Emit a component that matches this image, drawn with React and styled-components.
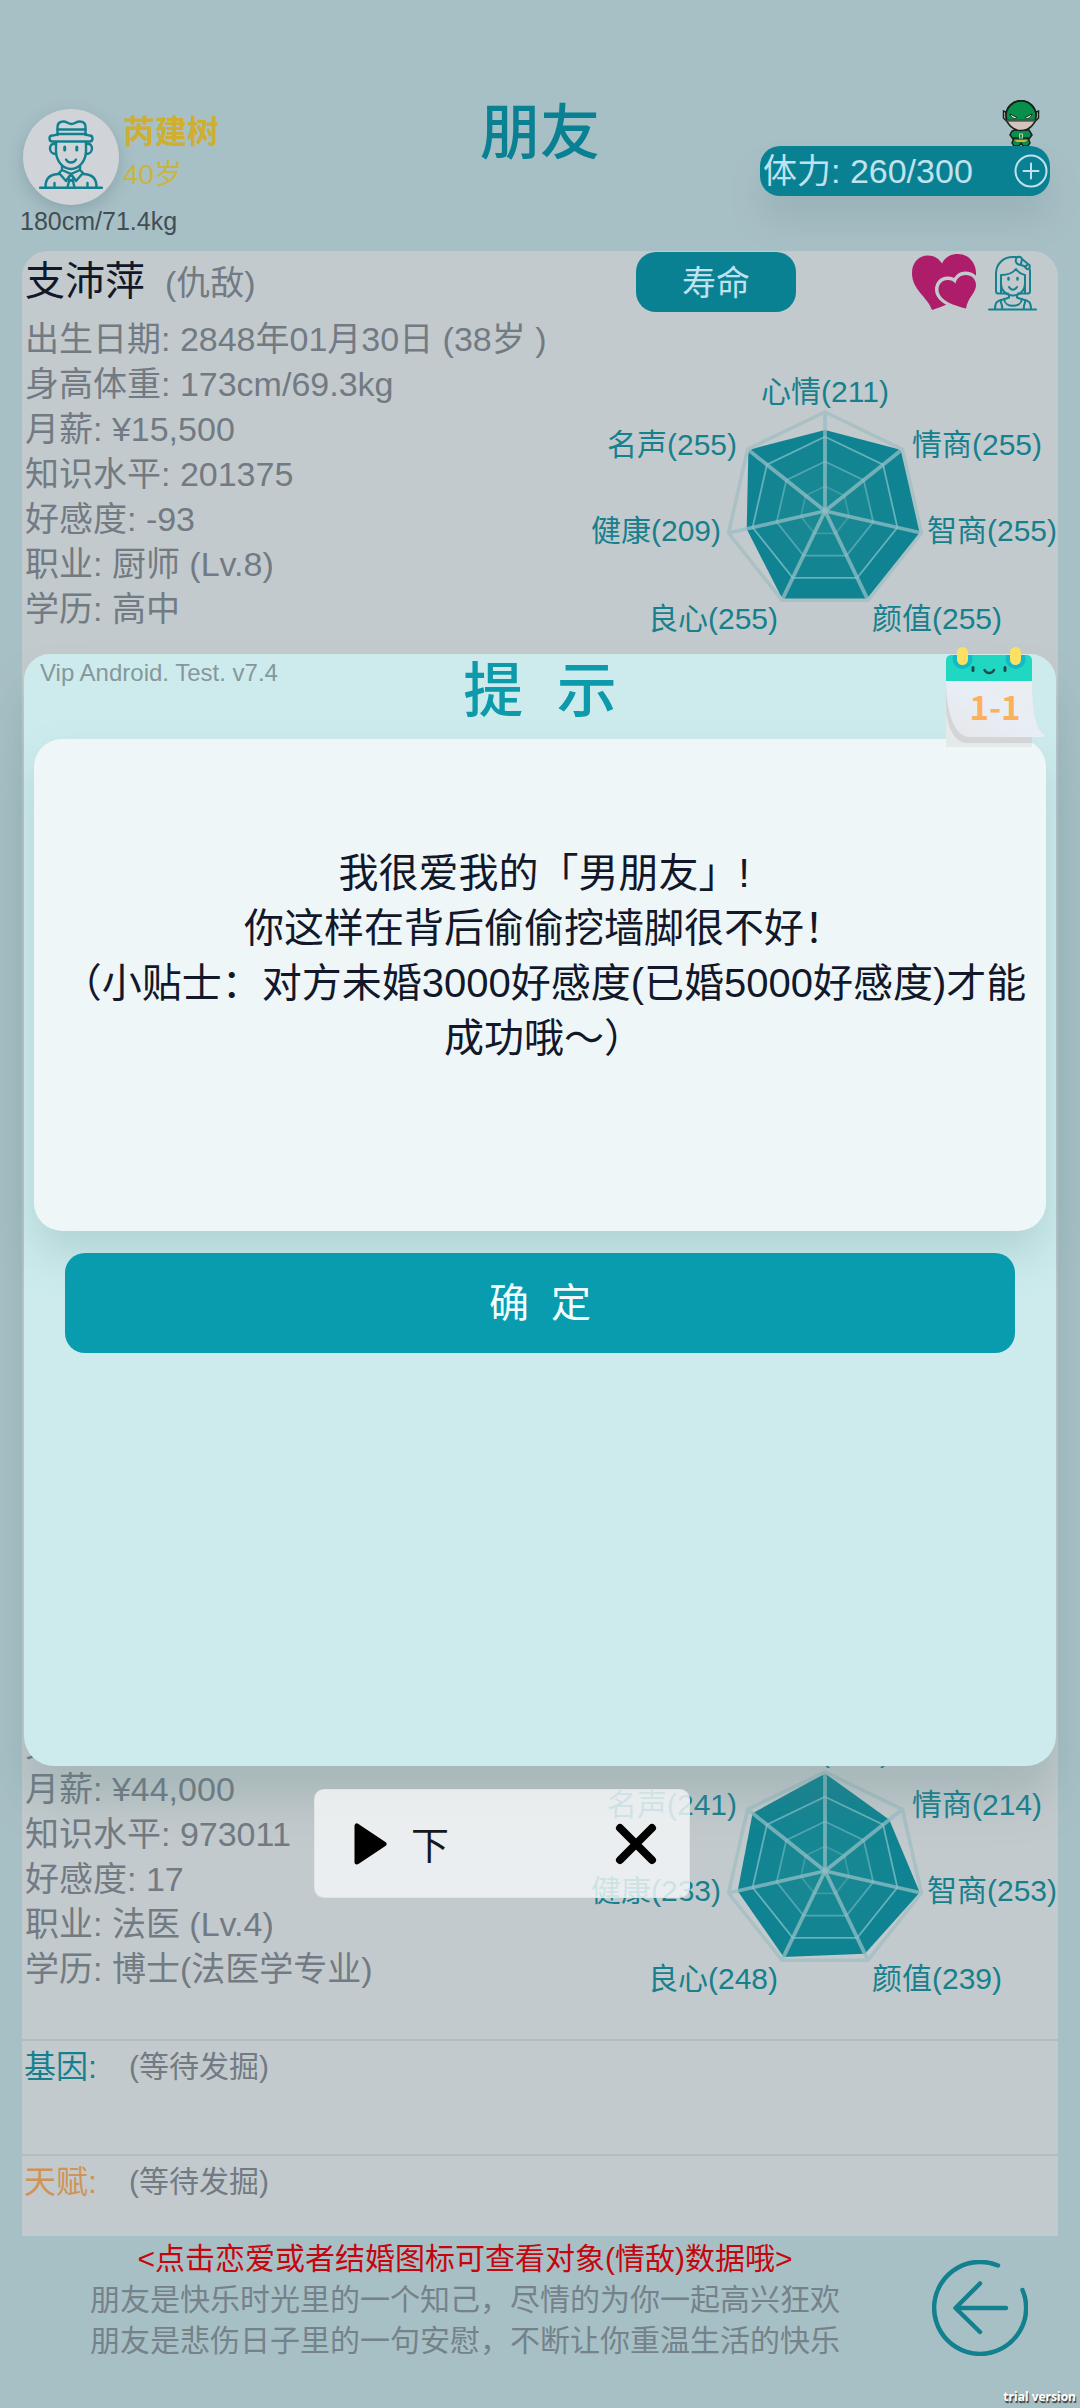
import React from "react";
import styled, { createGlobalStyle } from "styled-components";

const teal = "#0a8192";
const ink = "#727a83";

const GlobalStyle = createGlobalStyle`
  * { box-sizing: border-box; }
  body {
    margin: 0;
    background: #a7c0c6;
    font-family: "Liberation Sans", "Noto Sans CJK SC", sans-serif;
  }
  h1, h2, p, ul, dl, dd, dt { margin: 0; padding: 0; font-weight: 400; }
  button { border: 0; padding: 0; background: none; font-family: inherit; cursor: pointer; }
  svg { display: block; }
`;

const Screen = styled.div`
  position: relative;
  display: flex;
  flex-direction: column;
  height: 100vh;
  overflow: hidden;
`;

const Header = styled.header`
  display: grid;
  grid-template-columns: 1fr auto 1fr;
  align-items: start;
  flex: 0 0 251px;
  padding: 98px 20px 0;
`;

const Profile = styled.div`
  padding-top: 11px;
`;

const ProfileRow = styled.div`
  display: flex;
  gap: 4px;
  padding-left: 3px;
`;

const Avatar = styled.div`
  display: flex;
  justify-content: center;
  width: 96px;
  height: 96px;
  padding-top: 11px;
  border-radius: 50%;
  background: #d0d3d7;
  box-shadow: 0 6px 16px rgba(60, 90, 100, 0.25);
`;

const PlayerName = styled.p`
  color: #cfae30;
  font-size: 32px;
  font-weight: 700;
  line-height: 46px;
`;

const PlayerAge = styled.p`
  color: #c9b443;
  font-size: 28px;
  line-height: 40px;
`;

const PlayerBody = styled.p`
  color: #434d54;
  font-size: 25px;
  line-height: 32px;
`;

const PageTitle = styled.h1`
  color: ${teal};
  font-size: 60px;
  font-weight: 500;
  line-height: 72px;
`;

const EnergyArea = styled.div`
  display: flex;
  flex-direction: column;
  align-items: flex-end;
  padding: 2px 10px 0 0;
`;

const HeroSlot = styled.div`
  padding-right: 10px;
`;

const Energy = styled.div`
  display: flex;
  align-items: center;
  justify-content: space-between;
  width: 290px;
  height: 50px;
  padding: 0 2px 0 3px;
  border-radius: 20px;
  background: ${teal};
  color: #c0e2ee;
  font-size: 34px;
  line-height: 50px;
  box-shadow: 0 24px 34px rgba(90, 110, 110, 0.16);
`;

const FriendList = styled.main`
  flex: 1 1 0;
  min-height: 0;
  margin: 0 22px;
  overflow: hidden;
  border-radius: 26px 26px 0 0;
  background: #c3cacd;
`;

const Card = styled.article`
  display: flex;
  flex-direction: column;
  height: 680px;
`;

const CardHeader = styled.header`
  display: flex;
  align-items: center;
  flex: 0 0 62px;
  padding: 0 20px 0 3px;
`;

const FriendName = styled.h2`
  flex: 1;
  color: #12182a;
  font-size: 40px;
  line-height: 60px;
`;

const Relation = styled.span`
  margin-left: 20px;
  color: ${ink};
  font-size: 34px;
`;

const LifeButton = styled.button`
  width: 160px;
  height: 60px;
  margin-right: 116px;
  padding-bottom: 4px;
  border-radius: 20px;
  background: ${teal};
  color: #c0e2ee;
  font-size: 34px;
`;

const IconPair = styled.div`
  display: flex;
  align-items: flex-end;
  gap: 12px;
`;

const CardBody = styled.div`
  display: flex;
  justify-content: space-between;
  flex: 0 0 366px;
  padding: 4px 0 0 3px;
`;

const Facts = styled.ul`
  list-style: none;
  color: ${ink};
  font-size: 34px;
  line-height: 45px;
  white-space: nowrap;
`;

const ChartSlot = styled.div`
  flex: 0 0 468px;
  margin-left: -200px;
  padding-top: 53px;
`;

const TraitRow = styled.dl`
  display: flex;
  gap: 32px;
  height: 115px;
  padding: 6px 0 0 2px;
  border-top: 2px solid #b3bcbf;
  line-height: 40px;
`;

const TraitLabel = styled.dt`
  color: ${(p) => p.$color};
  font-size: 32px;
`;

const TraitValue = styled.dd`
  color: ${ink};
  font-size: 30px;
`;

const Footer = styled.footer`
  display: flex;
  align-items: flex-start;
  justify-content: space-between;
  flex: 0 0 172px;
  padding: 2px 52px 0 90px;
`;

const Notes = styled.div`
  text-align: center;
  font-size: 30px;
  line-height: 41px;
  color: #75828a;
`;

const Warning = styled.p`
  color: #c4070f;
`;

const BackButton = styled.button`
  margin-top: 22px;
`;

const Watermark = styled.span`
  position: absolute;
  right: 4px;
  bottom: 2px;
  color: #fff;
  font: 700 12px/18px "Open Sans", sans-serif;
  text-shadow: 1px 2px 1px #333;
`;

const Overlay = styled.div`
  position: absolute;
  inset: 0;
  display: flex;
  align-items: center;
  padding: 12px 24px 0;
`;

const Dialog = styled.section`
  flex: 1;
  height: 1112px;
  padding: 0 10px;
  border-radius: 26px 26px 30px 30px;
  background: #cdebed;
  box-shadow: 0 34px 44px rgba(90, 130, 130, 0.26);
`;

const DialogHeader = styled.header`
  display: grid;
  grid-template-columns: 1fr auto 1fr;
  height: 85px;
`;

const Version = styled.p`
  padding-left: 6px;
  color: #85979c;
  font-size: 24px;
  line-height: 38px;
`;

const DialogTitle = styled.h2`
  color: #0d9aaa;
  font-size: 60px;
  font-weight: 500;
  line-height: 76px;
  white-space: pre;
`;

const CalendarSlot = styled.div`
  position: relative;
  justify-self: end;
  top: -8px;
`;

const Message = styled.div`
  display: flex;
  align-items: center;
  justify-content: center;
  height: 492px;
  padding: 0 16px 58px 24px;
  border-radius: 28px;
  background: #eef6f8;
  color: #12182a;
  font-size: 40px;
  line-height: 55px;
  text-align: center;
  box-shadow: 0 24px 40px rgba(120, 160, 160, 0.3);
`;

const Confirm = styled.button`
  position: relative;
  display: block;
  width: calc(100% - 62px);
  height: 100px;
  margin: 22px auto 0;
  padding-bottom: 6px;
  border-radius: 20px;
  background: #089cae;
  color: #f2fdff;
  font-size: 40px;
  white-space: pre;
`;

const FloatingBar = styled.div`
  position: absolute;
  left: 314px;
  top: 1789px;
  display: flex;
  align-items: center;
  width: 376px;
  height: 109px;
  padding: 0 32px 0 39px;
  border: 1px solid rgba(220, 226, 228, 0.8);
  border-radius: 10px;
  background: rgba(243, 245, 247, 0.83);
`;

const BarLabel = styled.span`
  flex: 1;
  padding: 4px 0 0 24px;
  color: #17181c;
  font-size: 38px;
  line-height: 50px;
`;

function ManIcon() {
  return (
    <svg width="64" height="70" viewBox="-1 -1 64 70" fill="none" stroke="#12808f" strokeWidth="2.4" strokeLinecap="round" strokeLinejoin="round" aria-hidden="true">
      <path d="M17.5 14V6c0-4 3-5.500 6-5.500 3.500 0 4.500 2.500 8 2.500s4.500-2.500 8-2.500c3 0 6 1.500 6 5.500v8" />
      <path d="M17.500 8.500h28M17.500 13h28" />
      <path d="M12.500 14.500c-4 0-4 6 0 6h37c4 0 4-6 0-6-1.500 0-2.500-.500-4-1.500M12.500 14.500c2 0 3.500-.500 5-1.500" />
      <path d="M16 21v9c0 10 7 18 15 18s15-8 15-18v-9" />
      <path d="M16 23c-8-2-8 10 0 10M46 23c8-2 8 10 0 10" />
      <path d="M24.700 26v3M36.800 26v3" strokeWidth="3" />
      <path d="M26 38.500c2 4 8 4 10 0" />
      <path d="M22 45v4l-3 3 7 8 5-7 5 7 7-8-3-3v-4M22 49l9 4 9-4" />
      <path d="M28 57l3-3 3 3-3 3zM29 60l-1.500 6.500M33 60l1.500 6.500" />
      <path d="M0 66.700h62M5.500 66c0-9 5-13 13.500-13M56.500 66c0-9-5-13-13.500-13M14.500 62v4M47.500 62v4" />
    </svg>
  );
}

function HeroIcon() {
  return (
    <svg width="38" height="46" viewBox="-1 0 38 46" aria-hidden="true">
      <g stroke="#17221a" strokeWidth="1.500">
        <path d="M3 12L.5 11v7l4 4zM33 12l2.500-1v7l-4 4z" fill="#d8c3b4" />
        <path d="M9 31L7 35l3 4h16l3-4-3-5H12z" fill="#0b8d51" />
        <path d="M11 38h14l2 5-2 3h-5l-2-3-2 3h-5l-2-3z" fill="#0b8d51" />
        <path d="M11 40h14l-3 2h-8z" fill="#c6b93e" stroke="none" />
        <circle cx="18" cy="15.500" r="15" fill="#d3c4bd" />
        <path d="M3 16a15 15 0 0 1 30 0l-1 4.500H4z" fill="#07904c" />
      </g>
      <path d="M3.500 20.500h29" stroke="#3f5c4a" strokeWidth="2" />
      <path d="M7 14l7 3.500c-1 2-6 1-7-3.500zM29 14l-7 3.500c1 2 6 1 7-3.500z" fill="#e8efe6" stroke="#17221a" strokeWidth="1" />
      <rect x="16.500" y="34" width="3" height="4" fill="none" stroke="#a9d9a0" />
    </svg>
  );
}

function PlusIcon() {
  return (
    <svg width="34" height="34" viewBox="0 0 34 34" fill="none" stroke="#c0e2ee" strokeWidth="2" strokeLinecap="round" aria-hidden="true">
      <circle cx="17" cy="17" r="15.500" />
      <path d="M17 9.500v15M9.500 17h15" />
    </svg>
  );
}

const smallHeart = "M54 54.500C44 52 26.500 47 26.500 35.500c0-5.500 4-9.500 9-9.500 3.500 0 6 1 8 3.500 1-5 5-8.500 10-8.500 6 0 10.500 4 10.500 10 0 8-8 12-10 23.500z";

function HeartsIcon() {
  return (
    <svg width="64" height="57" viewBox="0 0 64 57" aria-hidden="true">
      <path d="M20 56C15 42 0 36 0 19 0 8 7 1.500 16 1.500c6 0 11 3 14 8C33 3 39 0 46 0c10 0 18 8 18 19 0 16-20 30-44 37z" fill="#ad1d6a" />
      <path d={smallHeart} fill="#c3cacd" stroke="#c3cacd" strokeWidth="7" strokeLinejoin="round" />
      <path d={smallHeart} fill="#ad1d6a" />
    </svg>
  );
}

function WomanIcon() {
  return (
    <svg width="50" height="56" viewBox="-1 -1 50 56" fill="none" stroke="#16818f" strokeWidth="2" strokeLinecap="round" strokeLinejoin="round" aria-hidden="true">
      <path d="M19 37.500H9c-1.500 0-2-1-2-2.500V18C7 8 14 1 24 1h3M29 37.500h10c1.500 0 2-1 2-2.500V14" />
      <path d="M12 19v9c0 6 5 11.500 12 11.500S36 34 36 28v-9c-4-1-7-3-9-6-3 4-8 6-15 6zM12 28v9M36 28v9" />
      <path d="M27 3c1-3 5-3 6 0l6 5c3 1 2 6-1 5l-3-3-3-1c-4 0-6-3-5-6zM33 3l-1 5M39 8l-3 3" />
      <path d="M19.500 22v1.500M28.500 22v1.500" strokeWidth="2.500" />
      <path d="M20 31c2 3.500 6 3.500 8 0" />
      <path d="M20 39v2.500c-2 1-4 1.500-6 2-6 1-8 3-8 9.500M28 39v2.500c2 1 4 1.500 6 2 6 1 8 3 8 9.500" />
      <path d="M15 43c1 9 17 9 18 0M12 44c-1 3 2 5 1 9M36 44c1 3-2 5-1 9M0 53.500h47" />
    </svg>
  );
}

function CalendarIcon() {
  return (
    <svg width="101" height="102" viewBox="0 0 101 102" role="img" aria-label="1-1">
      <defs>
        <linearGradient id="page" x1="0" y1="1" x2="1" y2="0">
          <stop offset="0" stopColor="#e6e6e8" />
          <stop offset="0.5" stopColor="#e8eef6" />
          <stop offset="1" stopColor="#ececec" />
        </linearGradient>
        <clipPath id="lid"><path d="M1 35V15c0-4 2-6 6-6h74c4 0 6 2 6 6v20z" /></clipPath>
      </defs>
      <path d="M1 35h86v66H1z" fill="#e6e9ea" />
      <path d="M1 35h86v62H22C7 97 1 75 1 60z" fill="#d4d5d6" />
      <path d="M1 35h86c0 28 3 46 11 53 2 2 1 3-1 3H25C8 91 1 62 1 35z" fill="url(#page)" />
      <path d="M1 35V15c0-4 2-6 6-6h74c4 0 6 2 6 6v20z" fill="#20d8c2" />
      <g clipPath="url(#lid)" fill="#13b9c9">
        <circle cx="17.500" cy="13" r="10" />
        <circle cx="70.500" cy="13" r="10" />
      </g>
      <rect x="12" y="1" width="11" height="18" rx="5.500" fill="#fbe063" />
      <rect x="65" y="1" width="11" height="18" rx="5.500" fill="#fbe063" />
      <path d="M28 21.500v3M60 21.500v3" stroke="#22494c" strokeWidth="3" strokeLinecap="round" />
      <path d="M39.500 24c2 4 7.500 4 9.500 0" fill="none" stroke="#22494c" strokeWidth="2.500" strokeLinecap="round" />
      <text x="50" y="74" textAnchor="middle" fontFamily="Noto Sans CJK SC, sans-serif" fontWeight="700" fontSize="33" fill="#fbb05c">1-1</text>
    </svg>
  );
}

function BackIcon() {
  return (
    <svg width="96" height="96" viewBox="0 0 96 96" fill="none" stroke="#12808f" strokeWidth="4.500" strokeLinecap="round" strokeLinejoin="round" aria-hidden="true">
      <path d="M66 5.500A46 46 0 1 0 90.500 30" />
      <path d="M74 48H24M48 23.500L23.500 48 48 72" />
    </svg>
  );
}

const anchors = [
  [235, 32, "middle"],
  [322, 85, "start"],
  [337, 171, "start"],
  [282, 259, "start"],
  [188, 259, "end"],
  [131, 171, "end"],
  [147, 85, "end"],
];

function RadarChart({ stats }) {
  const cx = 235;
  const cy = 141;
  const radius = 99;
  const point = (i, r) => {
    const a = (Math.PI * 2 * i) / 7 - Math.PI / 2;
    return [(cx + r * Math.cos(a)).toFixed(1), (cy + r * Math.sin(a)).toFixed(1)];
  };
  const ring = (r) => stats.map((_, i) => point(i, r).join(",")).join(" ");
  return (
    <svg width="468" height="272" viewBox="0 0 468 272" role="img" aria-label="属性">
      <polygon points={stats.map((s, i) => point(i, (s[1] / 255) * (radius - 1)).join(",")).join(" ")} fill="#0f8391" />
      {[0.25, 0.5, 0.75].map((k) => (
        <polygon key={k} points={ring(radius * k)} fill="rgba(90,165,175,0.06)" stroke="#7cbcc6" strokeOpacity={0.2 + k * 0.8} strokeWidth="1.800" />
      ))}
      {stats.map((s, i) => {
        const [x, y] = point(i, radius);
        return <line key={s[0]} x1={cx} y1={cy} x2={x} y2={y} stroke="#93bfc6" strokeOpacity="0.75" strokeWidth="3.800" />;
      })}
      <polygon points={ring(radius)} fill="none" stroke="#a9c1c4" strokeWidth="3.600" strokeLinejoin="round" />
      <g fill="#17808d" fontSize="30">
        {stats.map(([label, value], i) => (
          <text key={label} x={anchors[i][0]} y={anchors[i][1]} textAnchor={anchors[i][2]}>{`${label}(${value})`}</text>
        ))}
      </g>
    </svg>
  );
}

const labels = ["心情", "情商", "智商", "颜值", "良心", "健康", "名声"];
const withLabels = (values) => labels.map((l, i) => [l, values[i]]);

const first = {
  facts: ["出生日期: 2848年01月30日 (38岁 )", "身高体重: 173cm/69.3kg", "月薪: ¥15,500", "知识水平: 201375", "好感度: -93", "职业: 厨师 (Lv.8)", "学历: 高中"],
  stats: withLabels([211, 255, 255, 255, 255, 209, 255]),
};

const last = {
  facts: ["\u00a0", "身高体重:", "月薪: ¥44,000", "知识水平: 973011", "好感度: 17", "职业: 法医 (Lv.4)", "学历: 博士(法医学专业)"],
  stats: withLabels([254, 214, 253, 239, 248, 233, 241]),
};

function FriendBody({ facts, stats }) {
  return (
    <CardBody>
      <Facts>
        {facts.map((f) => (
          <li key={f}>{f}</li>
        ))}
      </Facts>
      <ChartSlot>
        <RadarChart stats={stats} />
      </ChartSlot>
    </CardBody>
  );
}

export default function App() {
  return (
    <Screen>
      <GlobalStyle />
      <Header>
        <Profile>
          <ProfileRow>
            <Avatar><ManIcon /></Avatar>
            <div>
              <PlayerName>芮建树</PlayerName>
              <PlayerAge>40岁</PlayerAge>
            </div>
          </ProfileRow>
          <PlayerBody>180cm/71.4kg</PlayerBody>
        </Profile>
        <PageTitle>朋友</PageTitle>
        <EnergyArea>
          <HeroSlot><HeroIcon /></HeroSlot>
          <Energy>
            <span>体力: 260/300</span>
            <button aria-label="增加体力"><PlusIcon /></button>
          </Energy>
        </EnergyArea>
      </Header>

      <FriendList>
        <Card>
          <CardHeader>
            <FriendName>支沛萍<Relation>(仇敌)</Relation></FriendName>
            <LifeButton>寿命</LifeButton>
            <IconPair>
              <HeartsIcon />
              <WomanIcon />
            </IconPair>
          </CardHeader>
          <FriendBody {...first} />
        </Card>
        <Card />
        <Card>
          <CardHeader />
          <FriendBody {...last} />
          <TraitRow>
            <TraitLabel $color="#17808f">基因:</TraitLabel>
            <TraitValue>(等待发掘)</TraitValue>
          </TraitRow>
          <TraitRow>
            <TraitLabel $color="#cf9455">天赋:</TraitLabel>
            <TraitValue>(等待发掘)</TraitValue>
          </TraitRow>
        </Card>
      </FriendList>

      <Footer>
        <Notes>
          <Warning>&lt;点击恋爱或者结婚图标可查看对象(情敌)数据哦&gt;</Warning>
          <p>朋友是快乐时光里的一个知己，尽情的为你一起高兴狂欢</p>
          <p>朋友是悲伤日子里的一句安慰，不断让你重温生活的快乐</p>
        </Notes>
        <BackButton aria-label="返回"><BackIcon /></BackButton>
      </Footer>

      <Overlay>
        <Dialog role="dialog" aria-label="提示">
          <DialogHeader>
            <Version>Vip Android. Test. v7.4</Version>
            <DialogTitle>提  示</DialogTitle>
            <CalendarSlot><CalendarIcon /></CalendarSlot>
          </DialogHeader>
          <Message>
            <p>
              我很爱我的「男朋友」!<br />
              你这样在背后偷偷挖墙脚很不好！<br />
              （小贴士：对方未婚3000好感度(已婚5000好感度)才能成功哦～）
            </p>
          </Message>
          <Confirm>确  定</Confirm>
        </Dialog>
      </Overlay>

      <FloatingBar>
        <button aria-label="播放">
          <svg width="33" height="42" viewBox="0 0 33 42" aria-hidden="true">
            <path d="M3 3v36L30 21z" stroke="#000" strokeWidth="5" strokeLinejoin="round" />
          </svg>
        </button>
        <BarLabel>下</BarLabel>
        <button aria-label="关闭">
          <svg width="42" height="42" viewBox="0 0 42 42" stroke="#000" strokeWidth="8" strokeLinecap="round" aria-hidden="true">
            <path d="M5 5l32 32M37 5L5 37" />
          </svg>
        </button>
      </FloatingBar>

      <Watermark>trial version</Watermark>
    </Screen>
  );
}
